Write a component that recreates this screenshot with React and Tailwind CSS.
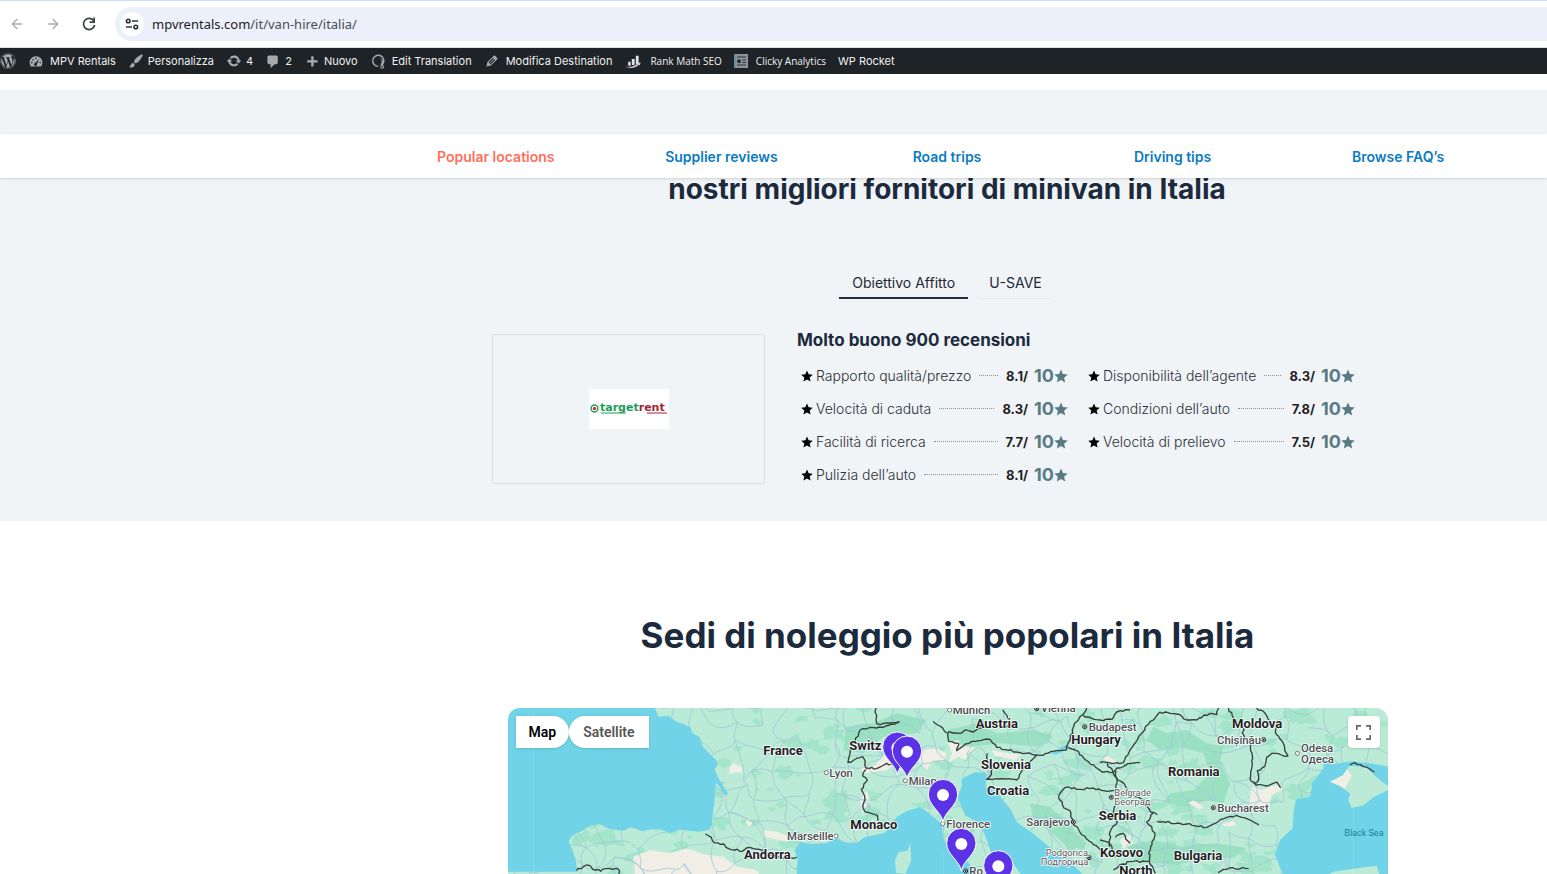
import React from 'react';
import { ArrowLeft, ArrowRight } from 'lucide-react';
import { FaWordpress } from 'react-icons/fa';

const NAV_LINKS = [
  'Popular locations',
  'Supplier reviews',
  'Road trips',
  'Driving tips',
  'Browse FAQ’s',
];

const RATINGS = [
  { label: 'Rapporto qualità/prezzo', score: '8.1' },
  { label: 'Disponibilità dell’agente', score: '8.3' },
  { label: 'Velocità di caduta', score: '8.3' },
  { label: 'Condizioni dell’auto', score: '7.8' },
  { label: 'Facilità di ricerca', score: '7.7' },
  { label: 'Velocità di prelievo', score: '7.5' },
  { label: 'Pulizia dell’auto', score: '8.1' },
];

const Glyph = ({ children, className = 'w-4 h-4' }) => (
  <svg
    viewBox="0 0 20 20"
    fill="currentColor"
    className={`${className} shrink-0 text-[#a7aaad]`}
    aria-hidden="true"
  >
    {children}
  </svg>
);

const BrowserBar = () => (
  <header className="flex h-12 shrink-0 items-center border-t border-b border-t-[#c9dcfb] border-b-[#dfe1e0] bg-white pl-[9px]">
    <div className="flex gap-5 text-[#a9abae]">
      <button type="button" aria-label="Back" className="h-4 w-4">
        <ArrowLeft className="h-4 w-4" strokeWidth={2} />
      </button>
      <button type="button" aria-label="Forward" className="h-4 w-4">
        <ArrowRight className="h-4 w-4" strokeWidth={2} />
      </button>
      <button type="button" aria-label="Reload" className="h-4 w-4 text-[#3c4043]">
        <svg viewBox="0 0 16 16" className="h-4 w-4" aria-hidden="true">
          <path d="M13 5.2A5.6 5.6 0 1 0 13.6 9" fill="none" stroke="currentColor" strokeWidth="1.7" />
          <path d="M14 1.6V7H8.6V5.3h3.7V1.6z" fill="currentColor" />
        </svg>
      </button>
    </div>
    <div className="ml-[18px] flex h-[34px] flex-1 items-center rounded-l-full bg-[#ebf0fa] pl-[5px]">
      <span className="flex h-6 w-6 items-center justify-center rounded-full bg-white">
        <svg viewBox="0 0 14 14" className="h-[14px] w-[14px]" fill="none" stroke="#30343a" strokeWidth="1.6" aria-hidden="true">
          <circle cx="3.2" cy="4" r="1.8" />
          <path d="M7 4h6M1 10h6" />
          <circle cx="10.8" cy="10" r="1.8" />
        </svg>
      </span>
      <p className="ml-2 pt-0.5 font-['Noto_Sans',sans-serif] text-[13px] text-[#1f2023]">
        mpvrentals.com<span className="text-[#4a4d52]">/it/van-hire/italia/</span>
      </p>
    </div>
  </header>
);

const AdminItem = ({ icon, label, className = 'gap-1.5' }) => (
  <a href="#" className={`flex shrink-0 items-center whitespace-nowrap ${className}`}>
    {icon}
    {label && <span>{label}</span>}
  </a>
);

const AdminBar = () => (
  <nav
    aria-label="Toolbar"
    className="flex h-[26px] shrink-0 items-center gap-3 bg-[#1d2327] text-[11px] leading-4 text-[#f0f0f1]"
  >
    <AdminItem
      icon={<FaWordpress className="h-4 w-4 shrink-0 text-[#a7aaad]" aria-label="WordPress" />}
    />
    <AdminItem
      label="MPV Rentals"
      icon={
        <Glyph>
          <path
            fillRule="evenodd"
            d="M3.76 17h12.48A8 8 0 1 0 2 12c0 1.9.65 3.63 1.76 5zM10 5.7a1 1 0 1 0 0 2 1 1 0 0 0 0-2zM6.3 7.4a1 1 0 1 0 0 2 1 1 0 0 0 0-2zM4.8 11a1 1 0 1 0 0 2 1 1 0 0 0 0-2zM15.2 11a1 1 0 1 0 0 2 1 1 0 0 0 0-2zM13.9 7.6l-5 5a1.8 1.8 0 1 0 2.3 1.6z"
          />
        </Glyph>
      }
    />
    <AdminItem
      label="Personalizza"
      className="gap-1"
      icon={
        <Glyph>
          <path d="M18.33 3.57s.27-.8-.31-1.36c-.53-.52-1.22-.24-1.22-.24-.61.3-5.76 3.47-7.67 5.57-.86.96-2.06 3.79-1.09 4.82.92.98 3.96-.17 4.79-1 2.06-2.06 5.21-7.17 5.5-7.79zM1.4 17.65c2.37-1.56 1.46-3.41 3.23-4.64.93-.65 2.22-.62 3.08.29.63.67.8 2.57-.16 3.46-1.57 1.45-4 1.55-6.15.89z" />
        </Glyph>
      }
    />
    <AdminItem
      label="4"
      className="gap-1"
      icon={
        <Glyph>
          <path d="M10.2 3.28c3.53 0 6.43 2.61 6.92 6h2.08l-3.5 4-3.5-4h2.32c-.45-1.97-2.21-3.45-4.32-3.45-1.45 0-2.73.71-3.54 1.78L4.95 5.66C6.23 4.2 8.11 3.28 10.2 3.28zm-.4 13.44c-3.52 0-6.43-2.61-6.92-6H.8l3.5-4c1.17 1.33 2.33 2.67 3.5 4H5.48c.45 1.97 2.21 3.45 4.32 3.45 1.45 0 2.73-.71 3.54-1.78l1.71 1.95c-1.28 1.46-3.15 2.38-5.25 2.38z" />
        </Glyph>
      }
    />
    <AdminItem
      label="2"
      className="gap-1"
      icon={
        <Glyph>
          <path d="M5 3h9c1.1 0 2 .9 2 2v7c0 1.1-.9 2-2 2h-2l-5 5v-5H5c-1.1 0-2-.9-2-2V5c0-1.1.9-2 2-2z" />
        </Glyph>
      }
    />
    <AdminItem
      label="Nuovo"
      className="gap-1"
      icon={
        <Glyph>
          <path d="M17 9v3h-5v5H9v-5H4V9h5V4h3v5z" />
        </Glyph>
      }
    />
    <AdminItem
      label="Edit Translation"
      icon={
        <Glyph>
          <path
            d="M10.500 16.800A7 7 0 1 1 16.600 13"
            fill="none"
            stroke="currentColor"
            strokeWidth="1.700"
          />
          <path d="M11 6c4 1 5 5 2 9l3 .5c2-4 1-8-5-9.500z" />
          <circle cx="15.300" cy="17.300" r="1.800" fill="none" stroke="currentColor" strokeWidth="1.300" />
        </Glyph>
      }
    />
    <AdminItem
      label="Modifica Destination"
      icon={
        <Glyph>
          <path d="M13.89 3.39l2.71 2.72c.46.46.42 1.24.03 1.64l-8.01 8.02-5.56 1.16 1.16-5.58s7.6-7.63 7.99-8.03c.39-.39 1.22-.39 1.68.07zm-2.73 2.79l-5.59 5.61 1.11 1.11 5.54-5.65zm-2.97 8.23l5.58-5.6-1.07-1.08-5.59 5.6z" />
        </Glyph>
      }
    />
    <AdminItem
      label="Rank Math SEO"
      className="gap-2 font-['Open_Sans',sans-serif] text-[10px] font-medium"
      icon={
        <Glyph className="w-[18px] h-4">
          <path d="M4 11h3v5H4zM8.500 7.500h3.500V15H8.500zM13.500 3.500H17V14h-3.500z" fill="#e3e4e5" />
          <path d="M0 17c6 1.500 12-.5 16-4l-.8-1 4.300-.2-1 3.900-1.200-1.100C13 19 6 20 0 17z" fill="#c9cbcd" />
        </Glyph>
      }
    />
    <AdminItem
      label="Clicky Analytics"
      className="gap-2 font-['Open_Sans',sans-serif] text-[10px] font-medium"
      icon={
        <svg viewBox="0 0 14 14" className="h-[14px] w-[14px]" aria-hidden="true">
          <path d="M0 0h14v14H0z" fill="#8d9499" />
          <path d="M1 0v14" stroke="#4c86a0" />
          <path d="M3 3h9M3 11h9M8.500 6h3.500M8.500 8.500h3.500" stroke="#2b3238" strokeWidth="1.200" />
          <circle cx="5" cy="7.200" r="2" fill="#1d2f3b" />
        </svg>
      }
    />
    <AdminItem label="WP Rocket" />
  </nav>
);

const StickyNav = () => (
  <nav
    aria-label="Sections"
    className="relative z-10 h-11 shrink-0 bg-white pl-[383px] pr-9 shadow-sm"
  >
    <ul className="grid h-full grid-cols-5 items-center text-center text-[14px] font-semibold text-[#0b7bc1]">
      {NAV_LINKS.map((link, i) => (
        <li key={link}>
          <a href="#" className={i === 0 ? 'text-[#ff705b]' : ''}>
            {link}
          </a>
        </li>
      ))}
    </ul>
  </nav>
);

const Star = ({ className }) => (
  <svg viewBox="0 0 24 24" fill="currentColor" className={`${className} shrink-0`} aria-hidden="true">
    <path d="M12 .8l3.300 7.800 8.200.7-6.200 5.600 1.900 8.300L12 18.800l-7.200 4.400 1.900-8.300L.5 9.300l8.200-.7z" />
  </svg>
);

const RatingRow = ({ label, score }) => (
  <li className="flex h-[33px] items-center pl-1">
    <Star className="h-3 w-3 text-black" />
    <span className="ml-[3px] text-[14px] font-light text-[#2b3038]">{label}</span>
    <span className="mx-2 flex-1 border-b border-dotted border-[#8a8f96]" />
    <span className="pt-0.5 text-[13px] font-bold text-[#1f2023]">{score}/</span>
    <span className="ml-1.5 flex items-center text-[18px] font-bold text-[#587b83]">
      10
      <Star className="h-[14px] w-[14px]" />
    </span>
  </li>
);

const TargetRentLogo = () => (
  <svg viewBox="0 0 80 40" className="h-10 w-20 bg-white" role="img" aria-label="targetrent">
    <circle cx="5.500" cy="19.500" r="3.400" fill="#fff" stroke="#2f9d68" strokeWidth="1.500" />
    <circle cx="5.500" cy="19.500" r="1.700" fill="#c8323c" />
    <text
      x="11"
      y="22"
      fontSize="11"
      fontWeight="700"
      fontFamily="DejaVu Sans, sans-serif"
      fill="#18a058"
    >
      target
      <tspan fill="#a3252f">rent</tspan>
    </text>
    <path d="M12 24h25" stroke="#18a058" strokeWidth="1" />
    <path d="M58 24h20" stroke="#a3252f" strokeWidth="1" />
  </svg>
);

const Suppliers = () => (
  <section className="shrink-0 bg-[#f0f4f7] pb-[30px] pl-[347px]">
    <h2 className="text-center text-[28px] font-bold leading-[22px] text-[#1c2a3d]">
      nostri migliori fornitori di minivan in Italia
    </h2>

    <div role="tablist" className="mt-[67px] flex h-8 justify-center gap-2 text-[14px] text-[#1d2833]">
      <button
        type="button"
        role="tab"
        aria-selected="true"
        className="border-b-2 border-[#1d2f3b] px-[13px]"
      >
        Obiettivo Affitto
      </button>
      <button
        type="button"
        role="tab"
        aria-selected="false"
        className="rounded-sm border-b border-[#e8ebee] px-[13px]"
      >
        U-SAVE
      </button>
    </div>

    <div className="mt-[35px] flex gap-8 pl-[145px]">
      <div className="flex h-[150px] w-[273px] items-center justify-center rounded-[3px] border border-[#d9dcde]">
        <TargetRentLogo />
      </div>
      <div>
        <h3 className="text-[17px] font-bold leading-3 text-[#1c2a3d]">
          Molto buono 900 recensioni
        </h3>
        <ul className="mt-[13px] grid grid-cols-[271px_271px] gap-x-4">
          {RATINGS.map((rating) => (
            <RatingRow key={rating.label} {...rating} />
          ))}
        </ul>
      </div>
    </div>
  </section>
);

// Small seeded generator so the terrain is the same on every render
const createRandom = (seed) => {
  let s = seed;
  return () => {
    s = (s * 16807) % 2147483647;
    return s / 2147483647;
  };
};

const buildTerrain = () => {
  const rnd = createRandom(4271);
  const patches = [];
  for (let i = 0; i < 230; i++) {
    const cx = 200 + rnd() * 2460;
    const cy = 24 + rnd() * 498;
    const r = 5 + rnd() * 20;
    const points = [];
    for (let k = 0; k < 13; k++) {
      const a = (k / 13) * Math.PI * 2;
      const d = r * (0.4 + rnd() * 0.9);
      points.push(`${Math.round(cx + Math.cos(a) * d * 1.7)},${Math.round(cy + Math.sin(a) * d)}`);
    }
    patches.push(points.join(' '));
  }
  return patches;
};

const buildRoads = () => {
  const rnd = createRandom(911);
  const step = 68;
  const cols = 40;
  const rows = 9;
  const nodes = [];
  for (let y = 0; y < rows; y++) {
    for (let x = 0; x < cols; x++) {
      nodes.push([x * step + rnd() * 62, y * step - 20 + rnd() * 62]);
    }
  }
  const roads = [];
  const link = (a, b) => {
    if (!a || !b || rnd() < 0.25) return;
    const dx = b[0] - a[0];
    const dy = b[1] - a[1];
    const w1 = (rnd() - 0.5) * 0.6;
    const w2 = (rnd() - 0.5) * 0.6;
    const c1 = [a[0] + dx / 3 - dy * w1, a[1] + dy / 3 + dx * w1];
    const c2 = [a[0] + (dx * 2) / 3 - dy * w2, a[1] + (dy * 2) / 3 + dx * w2];
    roads.push(`M${[a, c1].flat().map(Math.round).join(' ').replace(/^(\S+ \S+) /, '$1C')} ${[c2, b].flat().map(Math.round).join(' ')}`);
  };
  for (let y = 0; y < rows; y++) {
    for (let x = 0; x < cols - 1; x++) {
      const n = y * cols + x;
      link(nodes[n], nodes[n + 1]);
      link(nodes[n], nodes[n + cols]);
      if (rnd() < 0.3) link(nodes[n], nodes[n + cols + 1]);
    }
  }
  return roads.join('');
};

// Turns a coarse border into a ragged one
const roughen = (points, seed) => {
  const rnd = createRandom(seed);
  const out = [points[0]];
  for (let i = 1; i < points.length; i++) {
    const [ax, ay] = points[i - 1];
    const [bx, by] = points[i];
    const steps = Math.max(1, Math.round(Math.hypot(bx - ax, by - ay) / 9));
    for (let k = 1; k <= steps; k++) {
      const t = k / steps;
      const j = k === steps ? 0 : 6;
      out.push([
        Math.round(ax + (bx - ax) * t + (rnd() - 0.5) * j),
        Math.round(ay + (by - ay) * t + (rnd() - 0.5) * j),
      ]);
    }
  }
  return out.map((p) => p.join(',')).join(' ');
};

const TERRAIN = buildTerrain();
const ROADS = buildRoads();

const BORDERS = [
  // Pyrenees and northern Portugal
  [[616, 402], [634, 412], [642, 428], [672, 432], [686, 446], [726, 454], [750, 442], [778, 448], [800, 462], [850, 474], [890, 472]],
  [[230, 512], [250, 500], [268, 496], [278, 508], [302, 514], [316, 506], [356, 508], [356, 522]],
  // Switzerland
  [[1128, 24], [1130, 70], [1140, 74], [1180, 68], [1198, 66]],
  [[1198, 66], [1150, 82], [1110, 82], [1080, 90], [1066, 120], [1050, 160], [1044, 188], [1062, 180], [1088, 170], [1098, 204], [1130, 206], [1160, 190], [1190, 200]],
  [[1300, 64], [1320, 78], [1344, 100], [1346, 124], [1376, 130], [1370, 152], [1390, 138]],
  // France and Italy
  [[1098, 208], [1088, 228], [1102, 240], [1084, 268], [1094, 288], [1088, 318], [1096, 336], [1132, 346], [1134, 362]],
  // Austria
  [[1344, 96], [1376, 100], [1400, 90], [1420, 96], [1440, 84], [1500, 78], [1522, 80], [1530, 64], [1508, 30]],
  [[1390, 138], [1416, 124], [1470, 118], [1490, 142], [1560, 158], [1620, 166], [1660, 154], [1700, 150]],
  [[1700, 150], [1706, 126], [1718, 100], [1724, 70], [1748, 44], [1760, 24]],
  [[1750, 46], [1800, 60], [1836, 58], [1850, 36], [1890, 30]],
  // Slovenia, Croatia, Bosnia
  [[1462, 160], [1466, 190], [1478, 204], [1474, 224], [1460, 238], [1504, 236], [1550, 240], [1570, 206], [1610, 166]],
  [[1702, 140], [1726, 150], [1766, 186], [1806, 216], [1840, 218], [1852, 204], [1894, 190], [1920, 188]],
  [[1848, 212], [1852, 240], [1844, 274]],
  [[1676, 290], [1696, 262], [1740, 268], [1780, 264], [1820, 274], [1860, 270]],
  [[1676, 290], [1692, 324], [1710, 332], [1722, 376], [1742, 400], [1780, 434], [1810, 454]],
  [[1856, 272], [1848, 314], [1840, 340], [1852, 366], [1830, 396], [1828, 440]],
  // Hungary and Romania
  [[1800, 188], [1870, 188], [1890, 150], [1916, 110], [1936, 80], [1960, 60], [1980, 36]],
  [[1822, 190], [1838, 214], [1854, 240], [1876, 258], [1890, 280], [1934, 302], [1952, 336], [1972, 344]],
  [[1972, 364], [2060, 372], [2120, 382], [2180, 352], [2210, 346], [2240, 356], [2276, 376]],
  [[1960, 338], [1940, 366], [1964, 398], [1956, 434], [1946, 460], [1948, 484]],
  [[1948, 484], [1900, 484], [1860, 494], [1840, 510]],
  [[1948, 484], [1966, 520]],
  [[1800, 420], [1830, 432], [1846, 470], [1870, 462]],
  [[1846, 412], [1870, 400], [1890, 430]],
  // Moldova and Ukraine
  [[1980, 36], [2030, 42], [2060, 60], [2090, 60], [2130, 40], [2150, 44], [2156, 24]],
  [[2186, 24], [2208, 64], [2228, 78], [2232, 118], [2252, 126], [2258, 176], [2250, 236], [2268, 256], [2300, 258], [2330, 246], [2342, 264]],
  [[2270, 24], [2294, 38], [2308, 62], [2324, 74], [2330, 104], [2350, 130], [2354, 152], [2364, 168], [2316, 160], [2300, 172], [2294, 200], [2272, 212], [2276, 240], [2260, 250]],
  [[2154, 518], [2188, 504], [2246, 506]],
  [[2550, 196], [2564, 188], [2590, 200], [2624, 216]],
].map((points, i) => roughen(points, 100 + i * 37));

const COUNTRIES = [
  { name: 'France', x: 790, y: 164 },
  { name: 'Andorra', x: 732, y: 477 },
  { name: 'Switz', x: 1048, y: 150 },
  { name: 'Monaco', x: 1051, y: 388 },
  { name: 'Austria', x: 1427, y: 84 },
  { name: 'Slovenia', x: 1443, y: 207 },
  { name: 'Croatia', x: 1461, y: 284 },
  { name: 'Hungary', x: 1714, y: 133 },
  { name: 'Serbia', x: 1796, y: 361 },
  { name: 'Kosovo', x: 1800, y: 472 },
  { name: 'North', x: 1858, y: 526 },
  { name: 'Romania', x: 2004, y: 229 },
  { name: 'Moldova', x: 2196, y: 84 },
  { name: 'Bulgaria', x: 2021, y: 481 },
];

const CITIES = [
  { name: 'Lyon', x: 988, y: 231, dot: [979, 218] },
  { name: 'Marseille', x: 861, y: 420, dot: [1008, 408] },
  { name: 'Munich', x: 1358, y: 41, dot: [1349, 30] },
  { name: 'Vienna', x: 1622, y: 37, dot: [1610, 26], capital: true },
  { name: 'Milan', x: 1226, y: 255, dot: [1216, 242] },
  { name: 'Florence', x: 1339, y: 384, dot: [1328, 371] },
  { name: 'Ro', x: 1408, y: 524, dot: [1397, 513], capital: true },
  { name: 'Budapest', x: 1766, y: 94, dot: [1754, 80], capital: true },
  { name: 'Sarajevo', x: 1579, y: 378, dot: [1720, 366], capital: true },
  { name: 'Bucharest', x: 2152, y: 335, dot: [2140, 323], capital: true },
  { name: 'Chișinău', x: 2151, y: 132, dot: [2291, 119], capital: true },
  { name: 'Odesa', x: 2403, y: 156, dot: [2392, 160] },
  { name: 'Одеса', x: 2403, y: 190 },
];

const SMALL_CITIES = [
  { name: 'Belgrade', x: 1843, y: 287, dot: [1834, 292], capital: true },
  { name: 'Београд', x: 1843, y: 314 },
  { name: 'Podgorica', x: 1637, y: 467, dot: [1767, 473], capital: true },
  { name: 'Подгорица', x: 1622, y: 494 },
];

const PINS = [
  [1192, 224],
  [1221, 236],
  [1329, 366],
  [1384, 513],
  [1495, 580],
];

const CityLabel = ({ name, x, y, dot, capital }) => (
  <g>
    {dot && (
      <circle
        cx={dot[0]}
        cy={dot[1]}
        r="6"
        fill="#fff"
        stroke={capital ? '#222' : '#777'}
        strokeWidth="3"
        paintOrder="normal"
      />
    )}
    {dot && capital && <circle cx={dot[0]} cy={dot[1]} r="3" fill="#222" stroke="none" />}
    <text x={x} y={y}>
      {name}
    </text>
  </g>
);

const EuropeMap = () => (
  <svg
    viewBox="24 24 2640 498"
    preserveAspectRatio="xMidYMin slice"
    className="h-full w-full bg-[#bbebd7]"
    role="img"
    aria-label="Map"
  >
    <g fill="#a3e5ca">
      {TERRAIN.map((points) => (
        <polygon key={points} points={points} />
      ))}
    </g>
    <g fill="#93dfbe" opacity="0.8">
      <path d="M1960 80l40 20 60-10 60 40 50 10-10 50 30 60-20 60-50-10-60 20-70-10 20-30 70-10 50-50-20-60-70-20-60 10-40-30z" />
      <path d="M1880 440l80-20 90 20 100-10 90 15-40 30-90 0-80 20-110-10z" />
      <path d="M1590 310l60 10 60 60 50 50-30 40-60-60-70-50z" />
      <path d="M1040 80l80-10 70-30 90 20-30 40-100 10-60 50-60-10z" />
      <path d="M1340 90l90-20 60 30 110-10 60 20-40 30-120-10-90 10-60-10z" />
    </g>

    {/* Snow and dry land */}
    <g fill="#f1eee6">
      <path d="M400 470l50-20 60 10 50-15 60 20 50 5 40 30 60 10 20 30H385l20-20z" />
      <path d="M690 200l12-12 10 8 14 6v18l-16-4-22 6z" />
      <path d="M740 355l18 10-6 14-14-6zM790 390l40 5 50 20-20 10-70-15z" />
      <path d="M1240 165l30-15 40-5 30 15-10 25-30-5-20 30-20-25-30 5z" />
      <path d="M1345 130l30-10 10 20 40 0-30 40-20-10-30 20 10-30z" />
      <path d="M1180 140l-60 60-40 0 10 20 70-10 50-40zM1080 300l20-30 10 30-25 40z" />
      <path d="M1475 150l50 10 40 5-20 15-60-12z" />
      <path d="M2255 260l30 10 40-15 30 10-40 20-10 50-25-10-35 10z" />
      <path d="M2080 300l30 20-10 8-35-18zM2165 372l35-8 10 12-35 4zM1860 420l30-14 10 24-30 20z" />
      <path d="M1820 165l30 20-10 8-30-16z" />
    </g>

    <path d={ROADS} fill="none" stroke="#a2c8d6" strokeWidth="3" opacity="0.85" />

    {/* Seas */}
    <g fill="#71d3e8">
      <path d="M24 24H465l10 26 30-2 25 17 40 15 8 20 22 12 5 23 18 20 26 25 3 18-8 9 10 25 30 50-8 4-28-40-4 54-6 45-4 32-6 12-30 6-60-6-28 10-32-12-30 2-20 5-35-12-25 10-40-5-30-15-30 5-20 15-30 13-12 20 10 22 10 28 6 40H24z" />
      <path d="M890 526l3-46-9-30 16-24 30 6 50-3 30-14 20 12 40 2 25-18 60-12 35-48 30-18 40-12 35 25 30 26 4 40 18 34 40 16 28 40 20 30z" />
      <path d="M1385 236l40-20 32 2 4 10-6 35 34-2 14 32 28 34 20 40 50 35 66 54 44 30 40 40h-186l-22-30-66-25-16-50-20-50-46-25-22-56 12-30z" />
      <path d="M2348 522l-6-14-17-44 15-44 38-35 2-45 8-42 40-8 8-26-2-12 36-46 2-32 26 18 58-8 52 6 60 10 60-20 34-22V526z" />
      <path d="M1650 160l26-14 34-16-20 22-22 12z" />
    </g>
    <g fill="#bbebd7">
      <path d="M1230 430l4 50-18 42-28-4-3-38 12-24 26-4z" />
      <path d="M2500 515l80-12 50-5 8 24h-150z" />
      <path d="M2490 245l40-20 18-28 50 5 34 32 32 24v12l-44 22-30 24-35 8-10-23 6-20-26-19z" />
    </g>
    <path d="M2490 245l40-20 10-18 16 20-22 40-14-10z" fill="#f1eee6" />
    <path d="M100 24v498M2560 322v200M1330 460v62" stroke="#fff" strokeWidth="1" opacity="0.35" />

    <g fill="none" stroke="#39413f" strokeWidth="4" strokeLinejoin="round">
      {BORDERS.map((points) => (
        <polyline key={points} points={points} />
      ))}
    </g>

    {/* Labels */}
    <g
      fontFamily="Roboto, sans-serif"
      stroke="#fff"
      strokeWidth="5"
      strokeLinejoin="round"
      paintOrder="stroke"
    >
      <g fontSize="34" fontWeight="500" fill="#4a4d50">
        {CITIES.map((city) => (
          <CityLabel key={city.name} {...city} />
        ))}
      </g>
      <g fontSize="28" fill="#55585b">
        {SMALL_CITIES.map((city) => (
          <CityLabel key={city.name} {...city} />
        ))}
      </g>
      <g fontSize="39" fontWeight="700" fill="#202124">
        {COUNTRIES.map(({ name, x, y }) => (
          <text key={name} x={x} y={y}>
            {name}
          </text>
        ))}
      </g>
    </g>
    <text x="2533" y="408" fontSize="27" fontFamily="Roboto, sans-serif" fill="#1b8297">
      Black Sea
    </text>

    {/* Rental pins */}
    {PINS.map(([x, y]) => (
      <g key={`${x}-${y}`} transform={`translate(${x} ${y})`}>
        <path
          d="M0 0C-6-34-44-48-44-84a44 44 0 0 1 88 0C44-48 6-34 0 0z"
          fill="#5b32e6"
          stroke="#fff"
          strokeWidth="3"
        />
        <circle cy="-81" r="18" fill="#fff" />
      </g>
    ))}
  </svg>
);

const Locations = () => (
  <section className="flex min-h-0 flex-1 flex-col bg-white pl-[348px]">
    <h2 className="mt-[94px] text-center text-[35px] font-bold leading-10 text-[#1c2a3d]">
      Sedi di noleggio più popolari in Italia
    </h2>
    <div className="relative mx-auto mt-[53px] min-h-0 w-[880px] max-w-full flex-1 overflow-hidden rounded-t-xl">
      <EuropeMap />
      <div className="absolute left-2 top-2 flex h-8 font-[Roboto,sans-serif] text-[14px] font-semibold">
        <button type="button" className="rounded-r-full bg-white px-[13px] text-black shadow">
          Map
        </button>
        <button type="button" className="rounded-l-full bg-white px-[14px] text-[#565656] shadow">
          Satellite
        </button>
      </div>
      <button
        type="button"
        aria-label="Toggle fullscreen view"
        className="absolute right-2 top-2 flex h-8 w-8 items-center justify-center rounded-sm bg-white shadow"
      >
        <svg viewBox="0 0 18 18" className="h-[15px] w-[15px]" fill="#666" aria-hidden="true">
          <path d="M0 0v6h2V2h4V0zm16 0h-4v2h4v4h2V0zm0 16h-4v2h6v-6h-2zM2 12H0v6h6v-2H2z" />
        </svg>
      </button>
    </div>
  </section>
);

export default function App() {
  return (
    <div className="flex h-screen flex-col overflow-hidden bg-white font-[Inter,sans-serif]">
      <BrowserBar />
      <AdminBar />
      <div className="mt-4 h-11 shrink-0 bg-[#f0f4f7]" />
      <StickyNav />
      <Suppliers />
      <Locations />
    </div>
  );
}
